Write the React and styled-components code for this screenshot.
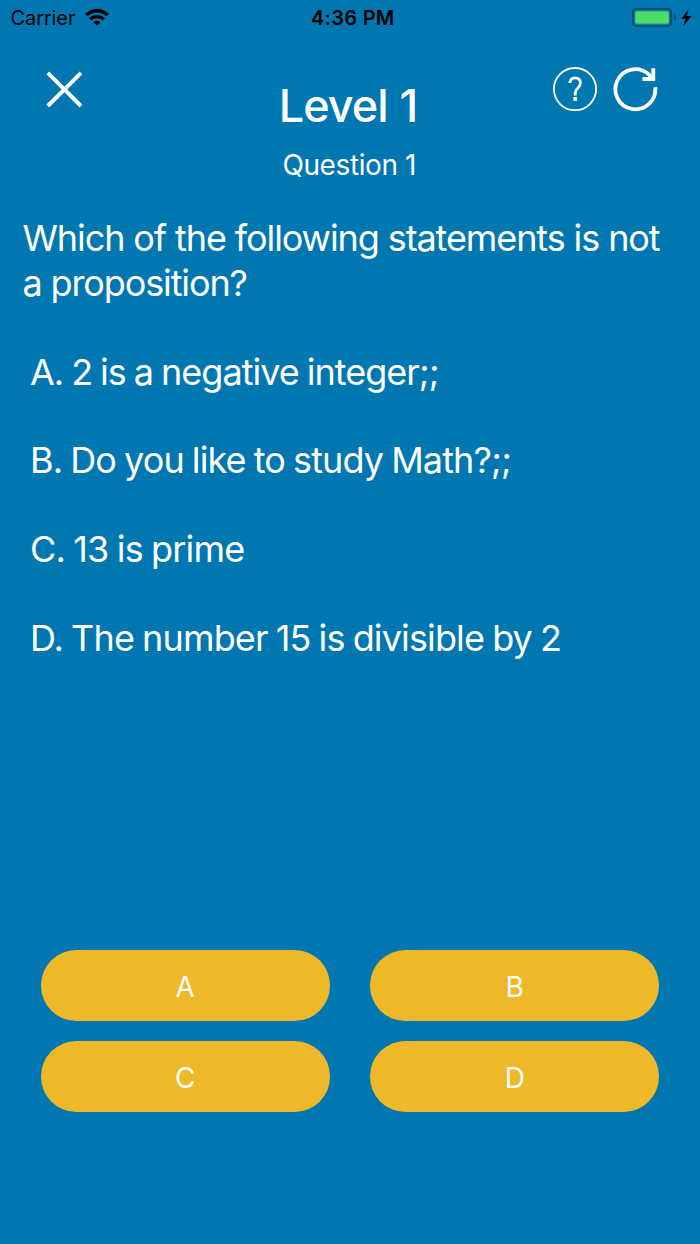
import React from "react";
import styled, { createGlobalStyle } from "styled-components";

const GlobalStyle = createGlobalStyle`
  * { box-sizing: border-box; }
  body { margin: 0; background: #0077b0; }
  svg { display: block; }
`;

const Screen = styled.main`
  display: flex;
  flex-direction: column;
  width: 700px;
  height: 1244px;
  overflow: hidden;
  background: #0077b0;
  color: #fff;
  font-family: Inter, "Liberation Sans", sans-serif;
`;

const StatusBar = styled.div`
  display: grid;
  grid-template-columns: 1fr auto 1fr;
  align-items: center;
  height: 36px;
  padding: 0 8px 0 10.5px;
  color: #000;
  font-size: 20px;
  line-height: 36px;
`;

const StatusLeft = styled.div`
  display: flex;
  align-items: center;
  gap: 9.5px;
  letter-spacing: -0.1px;
`;

const Clock = styled.div`
  font-weight: 600;
  font-size: 20px;
  letter-spacing: 0.3px;
  padding-left: 3px;
`;

const StatusRight = styled.div`
  display: flex;
  justify-content: flex-end;
`;

const Header = styled.header`
  display: grid;
  grid-template-columns: 200px 1fr 200px;
  height: 152px;
`;

const HeaderSide = styled.div`
  display: flex;
  align-items: flex-start;
  justify-content: ${(p) => (p.$end ? "flex-end" : "flex-start")};
  gap: 15.2px;
  padding: ${(p) => (p.$end ? "30px 41px 0 0" : "34px 0 0 45px")};
`;

const IconButton = styled.button`
  padding: 0;
  border: 0;
  background: none;
  color: inherit;
`;

const Titles = styled.div`
  display: flex;
  flex-direction: column;
  align-items: center;
  white-space: nowrap;
`;

const Title = styled.h1`
  margin: 43px 0 0;
  padding-right: 4px;
  font-size: 45px;
  font-weight: 500;
  line-height: 54px;
  letter-spacing: -1px;
  word-spacing: 1px;
`;

const Subtitle = styled.h2`
  margin: 15px 0 0;
  padding-right: 1.5px;
  font-size: 28px;
  font-weight: 400;
  line-height: 34px;
  letter-spacing: -0.4px;
`;

const Question = styled.section`
  flex: 1;
  padding: 28.3px 20px 0 22.5px;
  font-size: 36px;
  line-height: 44.33px;
`;

const Line = styled.div`
  white-space: nowrap;
  letter-spacing: ${(p) => p.$spacing || 0}px;
`;

const Options = styled.div`
  display: grid;
  gap: 44.33px;
  margin-top: 44.73px;
  padding-left: 7.5px;
  word-spacing: -1.2px;
`;

const Answers = styled.div`
  display: grid;
  grid-template-columns: 1fr 1fr;
  gap: 20.4px 40.4px;
  padding: 0 40.7px 132.3px;
`;

const AnswerButton = styled.button`
  height: 70.7px;
  padding: 3px 0 0;
  border: 0;
  border-radius: 35.3px;
  background: #efb828;
  color: #fff;
  font-family: inherit;
  font-size: 28px;
  font-weight: 400;
`;

const WifiIcon = () => (
  <svg width="24" height="18" viewBox="0 0 24 18" fill="none" stroke="#000">
    <path d="M1.3 6.1a15.2 15.2 0 0 1 21.4 0" strokeWidth="3.5" />
    <path d="M5.2 10.4a9.7 9.7 0 0 1 13.6 0" strokeWidth="3.3" />
    <path d="M12 16.6 8.5 13.2a5 5 0 0 1 7 0Z" fill="#000" stroke="none" />
  </svg>
);

const BatteryIcon = () => (
  <svg width="60" height="20" viewBox="0 0 60 20">
    <rect x="0.8" y="0.8" width="38.4" height="17.4" rx="4" fill="none" stroke="#00476a" strokeWidth="1.6" />
    <rect x="3.2" y="3.2" width="33.7" height="12.6" rx="1.8" fill="#4cdb63" />
    <path d="M42 6.4q2.1.8 2.1 3.1t-2.1 3.1Z" fill="#00476a" />
    <path d="M56.8 1 49.4 10.7h4.1L51.2 18.2 59.4 8h-4.9Z" fill="#000" />
  </svg>
);

const CloseIcon = () => (
  <svg width="39" height="39" viewBox="0 0 39 39" stroke="#fff" strokeWidth="3.9" fill="none">
    <path d="M2.8 2.8 36 36M36 2.8 2.8 36" />
  </svg>
);

const HelpIcon = () => (
  <svg width="46" height="46" viewBox="0 0 46 46" fill="none" stroke="#fff">
    <circle cx="23" cy="23.1" r="21.1" strokeWidth="1.8" />
    <path d="M17.9 17c.2-3.2 2.1-5.1 5.2-5.1 3.3 0 5.3 1.9 5.3 5.1 0 2.3-1 3.6-2.7 5.3-1.9 1.8-2.5 2.8-2.5 5v2.1" strokeWidth="2.8" />
    <rect x="21.3" y="31" width="3.8" height="3.8" fill="#fff" stroke="none" />
  </svg>
);

const RefreshIcon = () => (
  <svg width="46" height="46" viewBox="0 0 46 46" fill="none" stroke="#fff" strokeWidth="3.8">
    <path d="M42.3 21.3a20 20 0 1 1-6.6-13L40 13" />
    <path d="M40.3 2.3v10.7H29.5" />
  </svg>
);

const questionLines = [
  { text: "Which of the following statements is not", spacing: -1.1 },
  { text: "a proposition?", spacing: -1.12 },
];

const options = [
  { text: "A. 2 is a negative integer;;", spacing: -0.98 },
  { text: "B. Do you like to study Math?;;", spacing: -0.88 },
  { text: "C. 13 is prime", spacing: -0.78 },
  { text: "D. The number 15 is divisible by 2", spacing: -0.86 },
];

export default function App() {
  return (
    <Screen>
      <GlobalStyle />
      <StatusBar>
        <StatusLeft>
          Carrier
          <WifiIcon />
        </StatusLeft>
        <Clock>4:36 PM</Clock>
        <StatusRight>
          <BatteryIcon />
        </StatusRight>
      </StatusBar>
      <Header>
        <HeaderSide>
          <IconButton aria-label="Close"><CloseIcon /></IconButton>
        </HeaderSide>
        <Titles>
          <Title>Level 1</Title>
          <Subtitle>Question 1</Subtitle>
        </Titles>
        <HeaderSide $end>
          <IconButton aria-label="Help"><HelpIcon /></IconButton>
          <IconButton aria-label="Restart"><RefreshIcon /></IconButton>
        </HeaderSide>
      </Header>
      <Question>
        {questionLines.map((l) => (
          <Line key={l.text} $spacing={l.spacing}>{l.text}</Line>
        ))}
        <Options>
          {options.map((l) => (
            <Line key={l.text} $spacing={l.spacing}>{l.text}</Line>
          ))}
        </Options>
      </Question>
      <Answers>
        {["A", "B", "C", "D"].map((a) => (
          <AnswerButton key={a}>{a}</AnswerButton>
        ))}
      </Answers>
    </Screen>
  );
}
